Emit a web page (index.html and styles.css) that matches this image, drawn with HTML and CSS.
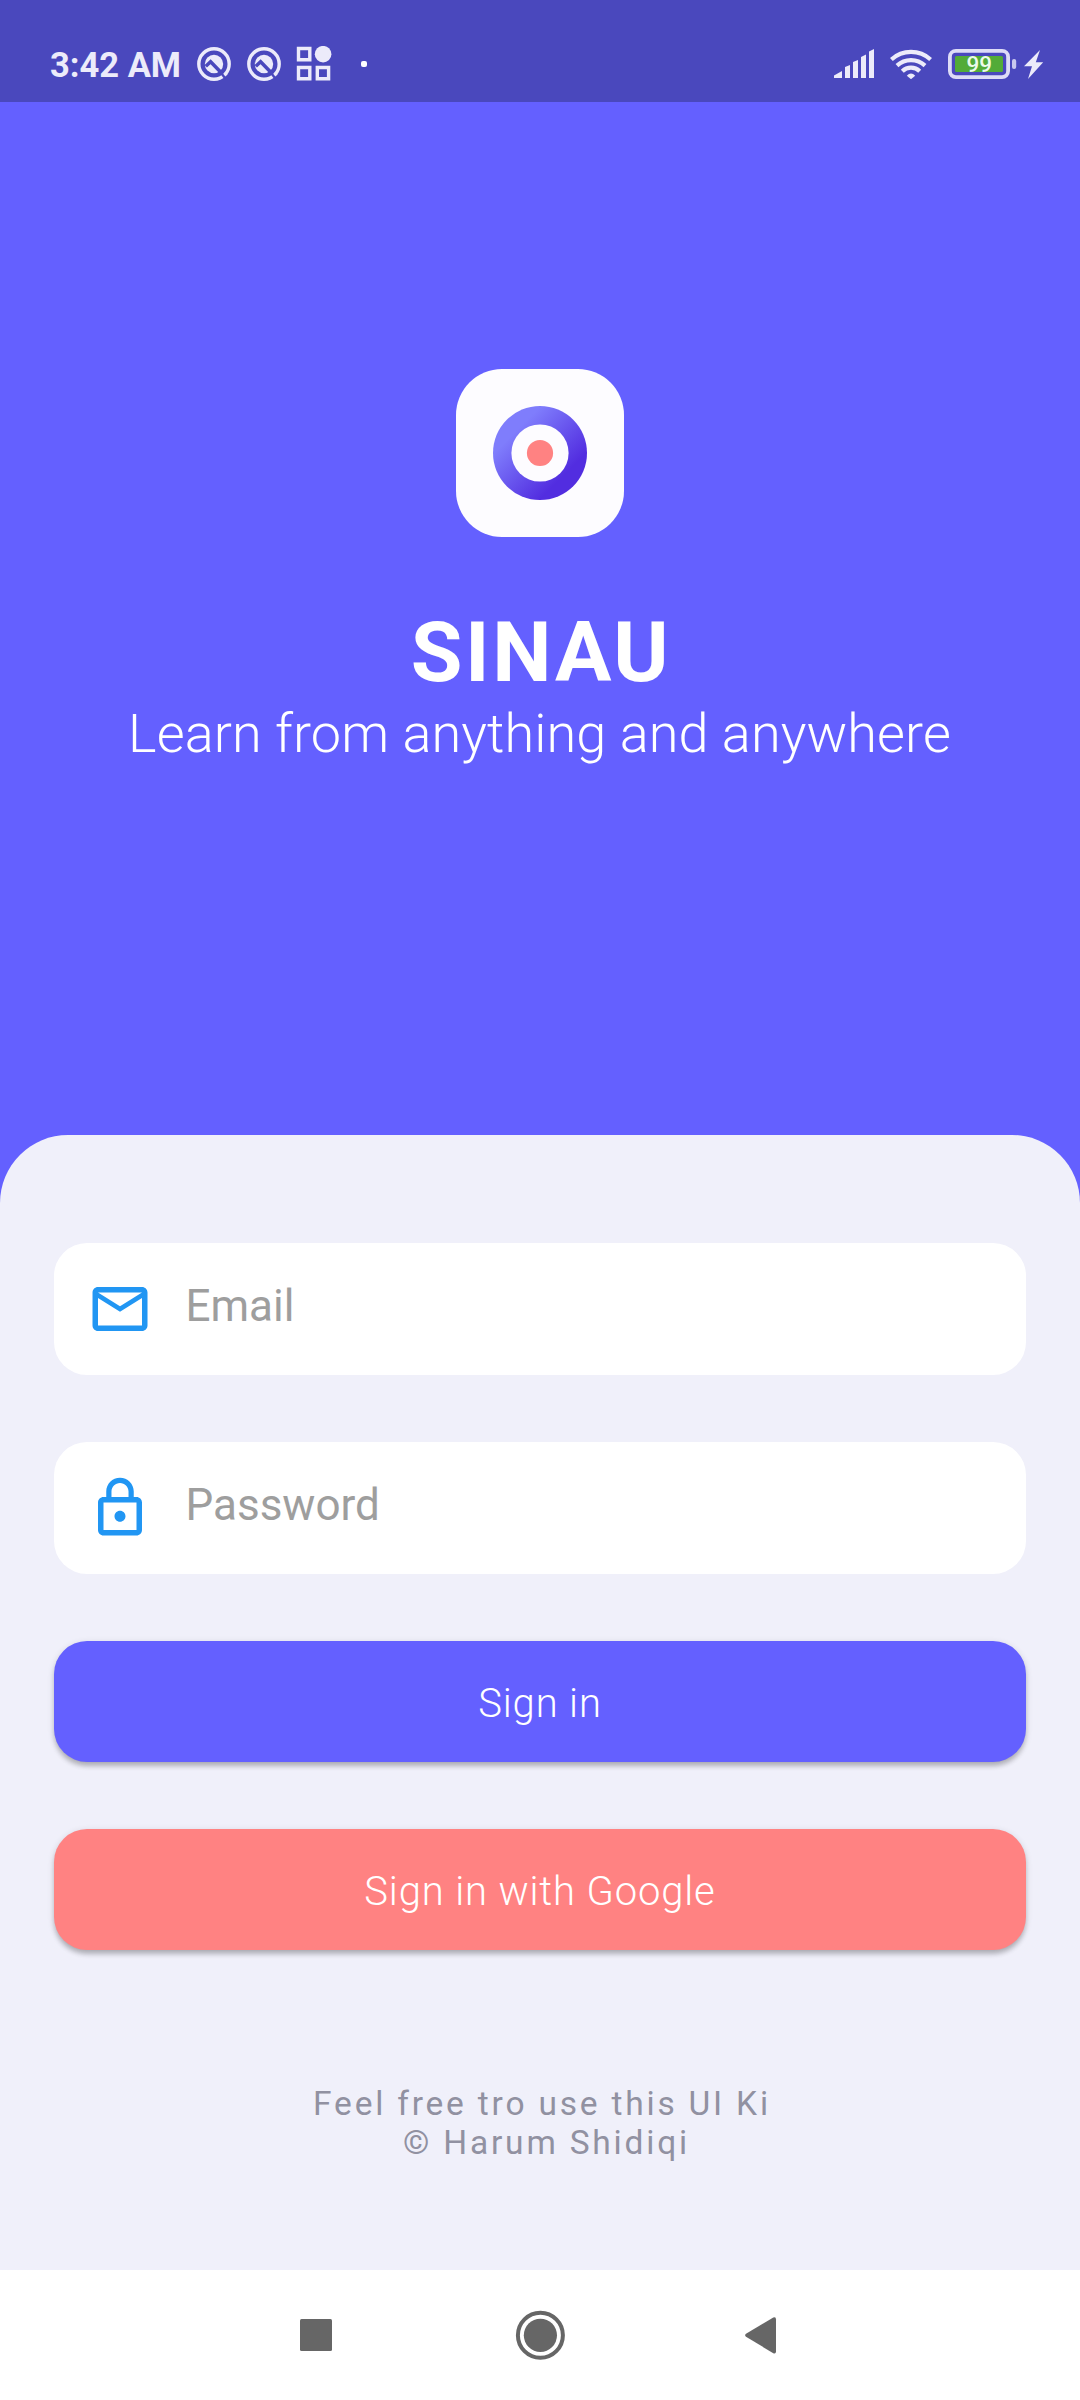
FILE: index.html
```
<!DOCTYPE html>
<html lang="en">
<head>
<meta charset="utf-8">
<title>Sinau – Sign in</title>
<link rel="stylesheet" href="styles.css">
</head>
<body>
<div class="screen">
  <header class="status">
    <span class="time">3:42 AM</span>
    <svg class="q-icon" viewBox="0 0 36 36"><use href="#q"/></svg>
    <svg class="q-icon second" viewBox="0 0 36 36">
      <defs>
        <g id="q">
          <circle cx="18" cy="18" r="15.2" fill="none" stroke="#ecebfa" stroke-width="3.4"/>
          <circle cx="18" cy="18" r="9.2" fill="#ecebfa"/>
          <path d="M9.8 20.2 14.6 15.7 25.8 27.2" fill="none" stroke="#4a48bd" stroke-width="3.5"/>
          <path d="M24 25.2 29.6 32.8" stroke="#4a48bd" stroke-width="2.6"/>
          <path d="M28.6 27 30.5 29.2" stroke="#ecebfa" stroke-width="3"/>
        </g>
      </defs>
      <use href="#q"/>
    </svg>
    <svg class="grid-icon" viewBox="0 0 36 36">
      <path d="M2.5 2.5h11.3v11.3H2.5zM2.5 21.5h11.3v11.3H2.5zM21.3 21.5h11.3v11.3H21.3z" fill="none" stroke="#ecebfa" stroke-width="3.4"/>
      <circle cx="27.1" cy="8.2" r="8.3" fill="#ecebfa"/>
    </svg>
    <span class="dot"></span>
    <svg class="signal" viewBox="0 0 40 30" fill="#ecebfa">
      <path d="M0 29V26.5L8 22V29ZM11 29V18L16 16V29ZM19 29V13L24 11V29ZM27 29V8L32 5.5V29ZM35 29V2.5L40 0V29Z"/>
    </svg>
    <svg class="wifi" viewBox="0 0 42 30" fill="none" stroke="#ecebfa" stroke-width="4.2">
      <path d="M1.4 10.5A29 29 0 0 1 40.6 10.5"/>
      <path d="M7 16.6A20.5 20.5 0 0 1 35 16.6"/>
      <path d="M12.3 22.2A12.5 12.5 0 0 1 29.7 22.2"/>
      <path d="M21 30.2 16.8 26.7Q21 22.4 25.2 26.7Z" fill="#ecebfa" stroke="none"/>
    </svg>
    <svg class="battery" viewBox="0 0 69 30">
      <rect x="1.9" y="1.9" width="58.2" height="26.2" rx="6" fill="none" stroke="#dddcf7" stroke-width="3.8"/>
      <rect x="7" y="7" width="48" height="16" rx="1.5" fill="#52ab38"/>
      <rect x="64" y="10" width="4.2" height="10" rx="2" fill="#c9c8ee"/>
      <text class="level" x="31.2" y="23.4" text-anchor="middle">99</text>
    </svg>
    <svg class="bolt" viewBox="0 0 20 29"><path d="M16 0 0 16.3H8L4 29 19.2 12.3H11.8Z" fill="#ecebfa"/></svg>
  </header>

  <section class="hero">
    <svg class="logo" viewBox="0 0 168 168">
      <defs>
        <linearGradient id="ring" x1="0.15" y1="0.15" x2="0.85" y2="0.85">
          <stop offset="0.15" stop-color="#7f7dfc"/>
          <stop offset="0.85" stop-color="#522de0"/>
        </linearGradient>
      </defs>
      <rect width="168" height="168" rx="46" fill="#fdfcff"/>
      <circle cx="84" cy="84" r="47" fill="url(#ring)"/>
      <circle cx="84" cy="84" r="28.6" fill="#fdfcff"/>
      <circle cx="84" cy="84" r="13.1" fill="#ff8282"/>
    </svg>
    <h1 class="title">SINAU</h1>
    <p class="tagline">Learn from anything and anywhere</p>
  </section>

  <main class="panel">
    <label class="field">
      <svg class="field-icon" viewBox="0 0 24 24"><path d="M20 4H4c-1.1 0-1.99.9-1.99 2L2 18c0 1.1.9 2 2 2h16c1.1 0 2-.9 2-2V6c0-1.1-.9-2-2-2zm0 14H4V8l8 5 8-5v10zm-8-7L4 6h16l-8 5z"/></svg>
      <input class="field-input" type="email" placeholder="Email">
    </label>
    <label class="field">
      <svg class="field-icon" viewBox="0 0 24 24"><path d="M12 17c1.1 0 2-.9 2-2s-.9-2-2-2-2 .9-2 2 .9 2 2 2zm6-9h-1V6c0-2.76-2.24-5-5-5S7 3.24 7 6v2H6c-1.1 0-2 .9-2 2v10c0 1.1.9 2 2 2h12c1.1 0 2-.9 2-2V10c0-1.1-.9-2-2-2zM8.9 6c0-1.71 1.39-3.1 3.1-3.1s3.1 1.39 3.1 3.1v2H8.9V6zM18 20H6V10h12v10z"/></svg>
      <input class="field-input" type="password" placeholder="Password">
    </label>
    <button class="button" type="button">Sign in</button>
    <button class="button google" type="button">Sign in with Google</button>
    <footer class="credits">
      <div>Feel free tro use this UI Ki</div>
      <div class="author">© Harum Shidiqi</div>
    </footer>
  </main>

  <nav class="navbar">
    <svg class="nav-icon" viewBox="0 0 50 50"><rect x="9" y="9" width="32" height="32" rx="1.5"/></svg>
    <svg class="nav-icon" viewBox="0 0 50 50"><circle cx="25.4" cy="25.3" r="22.5" fill="none" stroke="#666" stroke-width="4"/><circle cx="25.4" cy="25.3" r="16.6"/></svg>
    <svg class="nav-icon" viewBox="0 0 50 50"><path d="M7 23.8 34.3 7.5Q37 6.5 37 9.500V41.200Q37 44.200 34.300 43.200L7 26.800Q5.200 25.300 7 23.800Z"/></svg>
  </nav>
</div>
</body>
</html>
```
FILE: styles.css
```
* { box-sizing: border-box; }

body {
  margin: 0;
  font-family: Roboto, "Liberation Sans", sans-serif;
  background: #6460ff;
}

svg { display: block; flex: none; }

.screen {
  display: flex;
  flex-direction: column;
  width: 1080px;
  height: 2400px;
  overflow: hidden;
  background: #6460ff;
}

/* Status bar */
.status {
  display: flex;
  align-items: center;
  height: 102px;
  padding: 26px 36px 0 50px;
  background: #4a48bd;
}

.time {
  width: 146px;
  padding-top: 2px;
  color: #ecebfa;
  font-size: 34.5px;
  font-weight: 700;
  line-height: 40px;
  white-space: nowrap;
}

.q-icon { width: 36px; height: 36px; }
.second { margin-left: 14px; }
.grid-icon { width: 36px; height: 36px; margin-left: 14px; }

.dot {
  width: 6px;
  height: 6px;
  margin-left: 29px;
  border-radius: 2px;
  background: #fff;
}

.signal { width: 40px; height: 30px; margin-left: auto; }
.wifi { width: 42px; height: 30px; margin-left: 16px; }
.battery { width: 69px; height: 30px; margin-left: 16px; }
.bolt { width: 20px; height: 29px; margin-left: 7px; }
.level { fill: #ecfaea; font-size: 22.5px; font-weight: 500; }

/* Brand area */
.hero {
  display: flex;
  flex-direction: column;
  align-items: center;
  height: 1033px;
  padding-top: 267px;
  color: #fff;
}

.logo { width: 168px; height: 168px; }

.title {
  margin: 67px 0 0;
  padding-left: 2px;
  font-size: 84px;
  font-weight: 700;
  line-height: 98px;
  letter-spacing: 2.6px;
}

.tagline {
  margin: 0;
  padding-right: 1px;
  font-size: 54px;
  font-weight: 300;
  line-height: 63px;
  letter-spacing: 0.1px;
  white-space: nowrap;
}

/* Sign-in form */
.panel {
  display: flex;
  flex: 1;
  flex-direction: column;
  gap: 67px;
  padding: 107.5px 54px 0;
  border-radius: 68px 68px 0 0;
  background: #f0f0fa;
}

.field {
  display: flex;
  align-items: center;
  gap: 33px;
  height: 132px;
  padding: 0 33px 0 32.5px;
  border-radius: 33px;
  background: #fff;
}

.field-icon { width: 66px; height: 66px; fill: #2196f3; }

.field-input {
  flex: 1;
  min-width: 0;
  height: 60px;
  padding: 0 0 5px;
  border: 0;
  outline: 0;
  background: none;
  color: #333;
  font: 400 44px Roboto, "Liberation Sans", sans-serif;
}

.field-input::placeholder { color: #9e9e9e; opacity: 1; }

.button {
  height: 121px;
  padding: 4px 0 0;
  border: 0;
  border-radius: 33px;
  background: #6460ff;
  box-shadow: 0 5px 5px -1px rgba(0, 0, 0, 0.2), 0 2px 7px rgba(0, 0, 0, 0.14);
  color: #fff;
  font: 300 40px/47px Roboto, "Liberation Sans", sans-serif;
  letter-spacing: 0.85px;
}

.google { margin-top: 0.5px; background: #ff8282; }

.credits {
  margin-top: 66.5px;
  padding-left: 4px;
  color: #9191a1;
  font-size: 33.5px;
  line-height: 39px;
  letter-spacing: 2.8px;
  text-align: center;
}

.author { padding-left: 9px; }

/* System navigation */
.navbar {
  display: flex;
  align-items: flex-start;
  justify-content: center;
  gap: 174px;
  height: 130px;
  padding-top: 40px;
  background: #fff;
}

.nav-icon { width: 50px; height: 50px; fill: #666; }
```
